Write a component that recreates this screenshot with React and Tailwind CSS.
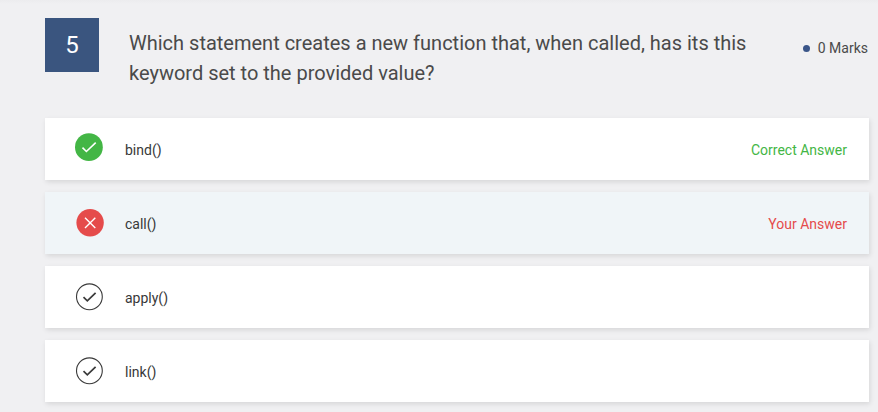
function CorrectIcon() {
  return (
    <svg className="-mt-0.5 size-8" viewBox="0 0 32 32" fill="none">
      <circle cx="15.9" cy="15.2" r="13.9" fill="#43b645" />
      <path d="M9.5 15.6 13.4 19.5 22.7 10.6" stroke="#fff" strokeWidth="1.6" />
    </svg>
  );
}

function WrongIcon() {
  return (
    <svg className="-mt-0.5 size-8" viewBox="0 0 32 32" fill="none">
      <circle cx="17.1" cy="16.8" r="13.7" fill="#e54b4b" />
      <path d="M12 11.7 22.3 22M22.3 11.7 12 22" stroke="#fff" strokeWidth="1.4" />
    </svg>
  );
}

function NeutralIcon() {
  return (
    <svg className="-mt-0.5 size-8" viewBox="0 0 32 32" fill="none" stroke="#3a3a3a">
      <circle cx="16.4" cy="16.8" r="12.9" strokeWidth="1.1" />
      <path d="M10.5 17.1 14.3 20.8 22.6 12.8" strokeWidth="1.7" />
    </svg>
  );
}

const options = [
  { text: "bind()", Icon: CorrectIcon, note: "Correct Answer", row: "bg-white", noteColor: "text-[#43b645]" },
  { text: "call()", Icon: WrongIcon, note: "Your Answer", row: "bg-[#f0f5f8]", noteColor: "text-[#e54b4b]" },
  { text: "apply()", Icon: NeutralIcon, row: "bg-white" },
  { text: "link()", Icon: NeutralIcon, row: "bg-white" },
];

export default function App() {
  return (
    <main className="h-[412px] w-[878px] overflow-hidden bg-[#f0f0f2] bg-linear-to-b from-[#ececee] to-[#f0f0f2] to-[4px] pt-[18px] pr-[9px] pl-[45px] font-['Roboto',sans-serif] text-[#4a4a4a]">
      <header className="flex h-[100px] items-start">
        <div className="flex size-[54px] items-center justify-center bg-[#3a557f] text-2xl text-white">5</div>
        <h1 className="ml-[30px] w-[640px] pt-[10px] text-[20px] leading-[30px]">
          Which statement creates a new function that, when called, has its this keyword set to the provided value?
        </h1>
        <div className="ml-auto flex items-center gap-[8px] pt-[20px] pr-px text-sm whitespace-nowrap">
          <span className="size-[7px] rounded-full bg-[#3a5588]" />
          0 Marks
        </div>
      </header>
      <ul className="flex flex-col gap-3">
        {options.map(({ text, Icon, note, row, noteColor }) => (
          <li key={text} className={`flex h-[62px] items-center pr-[22px] pl-[28px] text-sm text-[#383838] shadow-[1px_2px_5px_rgba(0,0,0,0.11)] ${row}`}>
            <Icon />
            <span className="ml-[20px] pt-[2px]">{text}</span>
            {note && <span className={`ml-auto pt-[2px] ${noteColor}`}>{note}</span>}
          </li>
        ))}
      </ul>
    </main>
  );
}
